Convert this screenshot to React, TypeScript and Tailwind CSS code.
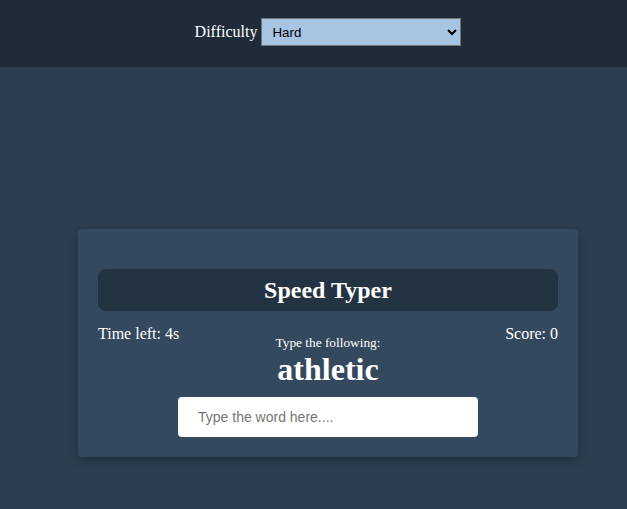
import { useState } from "react";

const serif = "font-['Liberation_Serif','Times_New_Roman',serif]";

export default function App() {
  const [difficulty, setDifficulty] = useState("hard");
  const [typed, setTyped] = useState("");

  return (
    <div className={`min-h-screen bg-[#2c3e50] text-white ${serif}`}>
      {/* settings bar */}
      <div className="h-[67px] bg-[#1f2b38] flex justify-center pl-[29px] pt-[18px]">
        <form className="flex items-center h-[28px]">
          <label htmlFor="difficulty" className="text-[16px] mr-[4px]">
            Difficulty
          </label>
          <select
            id="difficulty"
            value={difficulty}
            onChange={(e) => setDifficulty(e.target.value)}
            className="w-[200px] h-[28px] bg-[#a7c4e3] text-black border border-[#767676] pl-[6px] text-[13.33px] font-['Liberation_Sans',Arial,sans-serif]"
          >
            <option value="easy">Easy</option>
            <option value="medium">Medium</option>
            <option value="hard">Hard</option>
          </select>
        </form>
      </div>

      {/* game card */}
      <div className="pl-[29px] pt-[162px] flex justify-center">
        <div className="w-[500px] bg-[#34495e] rounded-[4px] p-5 shadow-[0_3px_10px_rgba(0,0,0,0.25)]">
          <h1 className="mt-5 h-[42px] rounded-[8px] bg-[#243342] flex items-center justify-center text-[24px] font-bold">
            Speed Typer
          </h1>
          <div className="grid grid-cols-[1fr_auto_1fr] mt-[14px]">
            <p className="text-[16px] leading-[18px]">Time left: 4s</p>
            <div className="flex flex-col items-center pt-[10px]">
              <small className="text-[13.33px] leading-[15px]">Type the following:</small>
              <h2 className="text-[32px] leading-[36px] font-bold mt-[1px]">athletic</h2>
            </div>
            <p className="text-[16px] leading-[18px] text-right">Score: 0</p>
          </div>
          <div className="flex justify-center mt-[10px]">
            <input
              type="text"
              value={typed}
              onChange={(e) => setTyped(e.target.value)}
              placeholder="Type the word here...."
              autoComplete="off"
              className="w-[300px] h-[40px] bg-white rounded-[4px] px-5 text-[14px] text-black placeholder:text-[#757575] outline-none font-['Liberation_Sans',Arial,sans-serif]"
            />
          </div>
        </div>
      </div>
    </div>
  );
}
